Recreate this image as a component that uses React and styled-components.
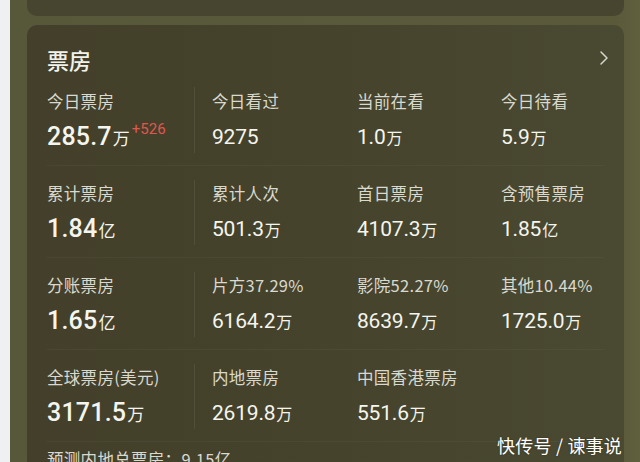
import React from "react";
import styled, { createGlobalStyle } from "styled-components";

const Global = createGlobalStyle`
  html, body {
    margin: 0;
    padding: 0;
    width: 640px;
    height: 462px;
    overflow: hidden;
    background: #eef0f2;
  }
  body {
    font-family: "Noto Sans CJK SC", "Noto Sans", sans-serif;
  }
`;

const Page = styled.div`
  position: relative;
  display: flex;
  width: 640px;
  height: 462px;
  overflow: hidden;
`;

const Strip = styled.div`
  width: 10px;
  flex-shrink: 0;
  background: #eef0f2;
`;

const Olive = styled.div`
  flex: 1;
  display: flex;
  flex-direction: column;
  gap: 9px;
  padding: 0 16px 0 17px;
  background: linear-gradient(90deg, #57573a 0%, #5a5a3b 96%, #60603f 100%);
`;

const TopCard = styled.div`
  height: 16px;
  flex-shrink: 0;
  border-radius: 0 0 10px 10px;
  background: #47452f;
`;

const Card = styled.div`
  flex: 1;
  border-radius: 10px 10px 0 0;
  background: linear-gradient(90deg, #433f2a 0%, #46442d 60%, #4a4931 100%);
  padding: 0 20px;
`;

const Header = styled.div`
  display: flex;
  align-items: center;
  justify-content: space-between;
  padding-top: 19px;
  height: 29px;
`;

const Title = styled.h2`
  margin: 0;
  font-size: 22px;
  line-height: 28px;
  font-weight: 500;
  color: #f2f2ec;
`;

const Chevron = styled.svg`
  width: 14px;
  height: 16px;
  margin-right: -7px;
  margin-top: -2px;
`;

const Row = styled.div`
  display: grid;
  grid-template-columns: 148px 162px 144px 1fr;
  height: ${(p) => (p.$tail ? "auto" : "92px")};
  box-sizing: border-box;
  border-top: ${(p) => (p.$first ? "none" : "1px solid rgba(255,255,255,0.035)")};
`;

const Cell = styled.div`
  position: relative;
  display: flex;
  flex-direction: column;
  padding-top: ${(p) => (p.$tail ? "6px" : p.$first ? "17px" : "16px")};
  padding-left: ${(p) => (p.$second ? "17px" : "0")};

  ${(p) =>
    p.$lead &&
    `
    &::after {
      content: "";
      position: absolute;
      right: 0;
      top: 14px;
      bottom: 12px;
      width: 1px;
      background: rgba(255,255,255,0.07);
    }
  `}
`;

const Label = styled.div`
  font-size: 16.5px;
  line-height: 22px;
  color: #d9d9cf;
  white-space: nowrap;
  letter-spacing: 0.3px;
`;

const Value = styled.div`
  margin-top: 10px;
  height: 30px;
  display: flex;
  align-items: baseline;
  color: #f5f5ef;
  white-space: nowrap;
`;

const Num = styled.span`
  font-family: "Roboto", "Noto Sans", sans-serif;
  font-weight: ${(p) => (p.$big ? 500 : 400)};
  font-size: ${(p) => (p.$big ? "25px" : "21px")};
  line-height: 30px;
  letter-spacing: ${(p) => (p.$big ? "0.2px" : "-0.2px")};
`;

const Unit = styled.span`
  font-size: ${(p) => (p.$big ? "17px" : "16px")};
  margin-left: 1px;
`;

const Delta = styled.span`
  font-family: "Roboto", "Noto Sans", sans-serif;
  font-size: 15px;
  color: #e0574f;
  align-self: flex-start;
  margin-top: -2px;
  margin-left: 2px;
`;

const Watermark = styled.div`
  position: absolute;
  right: 18px;
  bottom: 4px;
  font-size: 18px;
  color: #ffffff;
  letter-spacing: 0.2px;
  text-shadow: 0 0 2px rgba(0,0,0,0.35);
`;

const rows = [
  [
    { label: "今日票房", num: "285.7", unit: "万", delta: "+526" },
    { label: "今日看过", num: "9275" },
    { label: "当前在看", num: "1.0", unit: "万" },
    { label: "今日待看", num: "5.9", unit: "万" },
  ],
  [
    { label: "累计票房", num: "1.84", unit: "亿" },
    { label: "累计人次", num: "501.3", unit: "万" },
    { label: "首日票房", num: "4107.3", unit: "万" },
    { label: "含预售票房", num: "1.85", unit: "亿" },
  ],
  [
    { label: "分账票房", num: "1.65", unit: "亿" },
    { label: "片方37.29%", num: "6164.2", unit: "万" },
    { label: "影院52.27%", num: "8639.7", unit: "万" },
    { label: "其他10.44%", num: "1725.0", unit: "万" },
  ],
  [
    { label: "全球票房(美元)", num: "3171.5", unit: "万" },
    { label: "内地票房", num: "2619.8", unit: "万" },
    { label: "中国香港票房", num: "551.6", unit: "万" },
  ],
];

export default function App() {
  return (
    <>
      <Global />
      <Page>
        <Strip />
        <Olive>
          <TopCard />
          <Card>
            <Header>
              <Title>票房</Title>
              <Chevron viewBox="0 0 14 16">
                <path d="M4 2 L10 8 L4 14" fill="none" stroke="#d6d6cc" strokeWidth="1.5" strokeLinecap="round" strokeLinejoin="round" />
              </Chevron>
            </Header>
            {rows.map((row, i) => (
              <Row key={i} $first={i === 0}>
                {row.map((c, j) => (
                  <Cell key={j} $first={i === 0} $lead={j === 0} $second={j === 1}>
                    <Label>{c.label}</Label>
                    <Value>
                      <Num $big={j === 0}>{c.num}</Num>
                      {c.unit && <Unit $big={j === 0}>{c.unit}</Unit>}
                      {c.delta && <Delta>{c.delta}</Delta>}
                    </Value>
                  </Cell>
                ))}
              </Row>
            ))}
            <Row $tail>
              <Cell $tail>
                <Label>预测内地总票房：9.15亿</Label>
              </Cell>
            </Row>
          </Card>
        </Olive>
        <Watermark>快传号 / 谏事说</Watermark>
      </Page>
    </>
  );
}
